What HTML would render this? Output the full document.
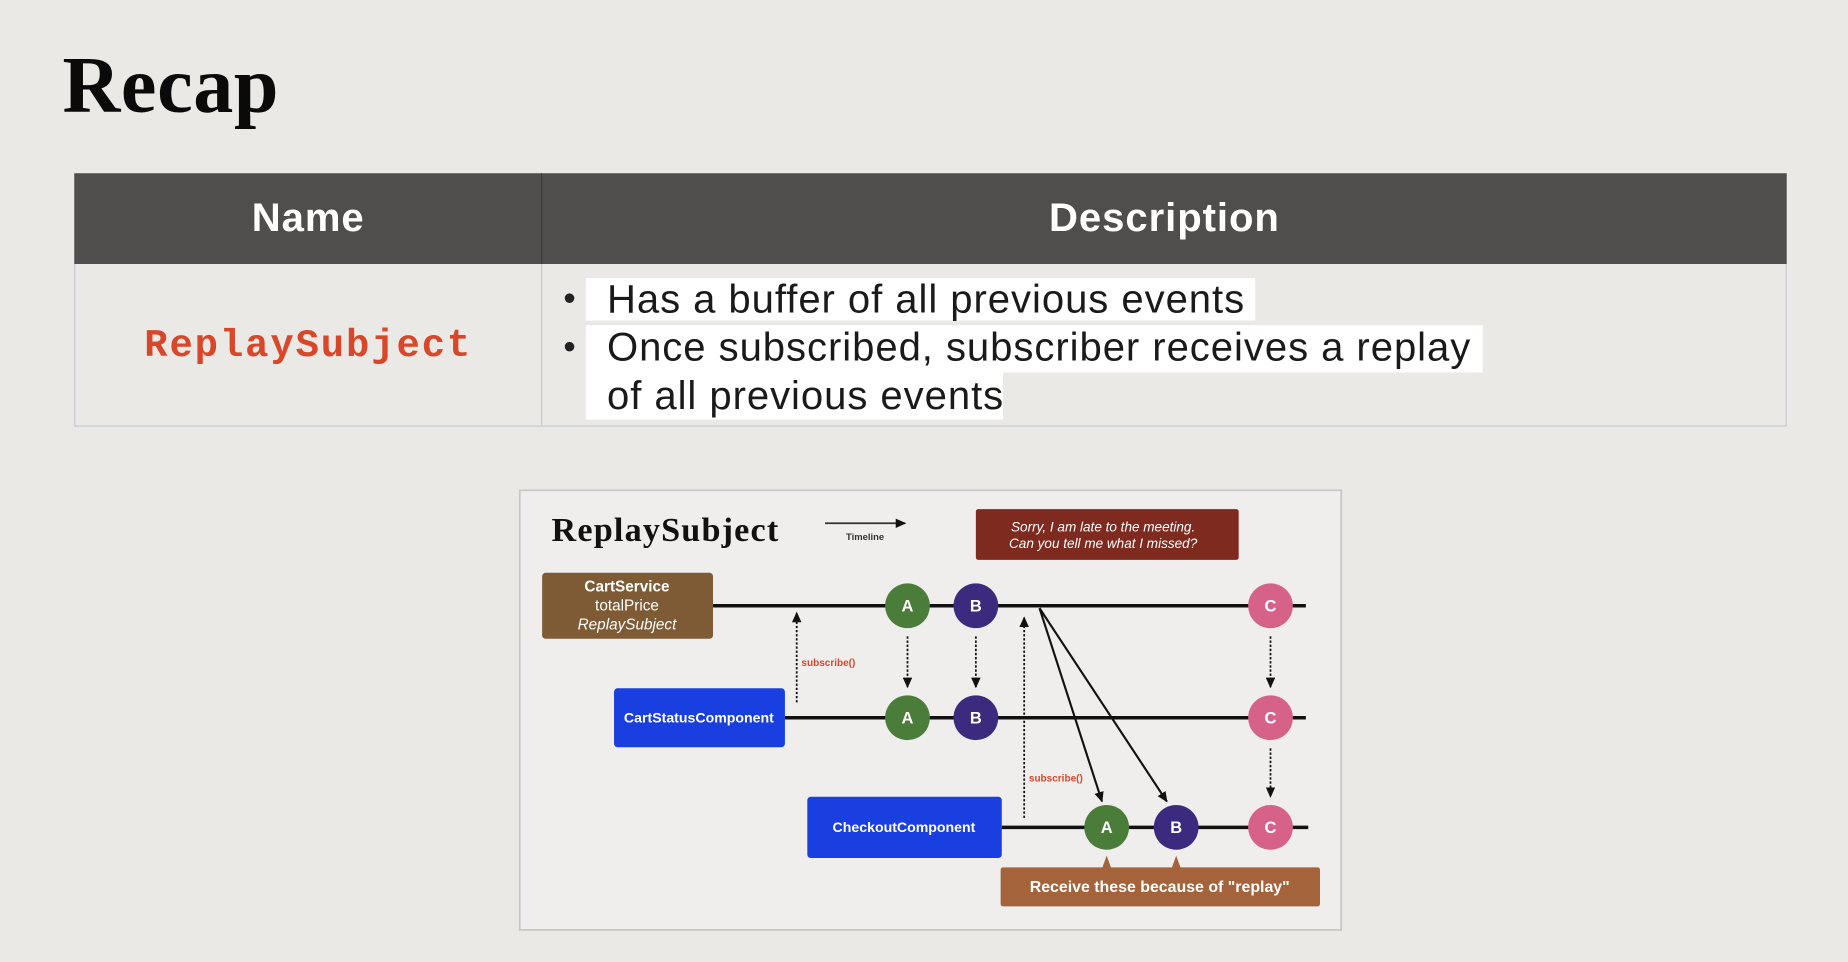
<!DOCTYPE html>
<html><head><meta charset="utf-8"><style>
html,body{margin:0;padding:0;width:1848px;height:962px;overflow:hidden;background:#ebe9e5;}
#s{position:absolute;left:0;top:0;width:1568px;height:816px;transform:scale(1.17857);transform-origin:0 0;background:#ebe9e5;font-family:"Liberation Sans",sans-serif;}
.t{position:absolute;}
.b{font-size:34px;line-height:40px;color:#1a1a1a;letter-spacing:0.8px}
</style></head><body><div id="s">
<div class="t" style="left:53px;top:32px;font-family:'Liberation Serif',serif;font-weight:bold;font-size:68px;line-height:80px;color:#0a0a0a;letter-spacing:0.5px">Recap</div>
<div class="t" style="left:63px;top:147px;width:1453px;height:77px;background:#4f4e4d"></div>
<div class="t" style="left:459px;top:147px;width:1px;height:77px;background:#3a3a3a"></div>
<div class="t" style="left:63px;top:224px;width:1451px;height:137px;border:1px solid #c3cbd2;border-top:none"></div>
<div class="t" style="left:459px;top:224px;width:1px;height:138px;background:#c3cbd2"></div>
<div class="t" style="left:63px;top:165px;width:397px;text-align:center;color:#fff;font-weight:bold;font-size:34px;line-height:40px;letter-spacing:0.8px">Name</div>
<div class="t" style="left:460px;top:165px;width:1056px;text-align:center;color:#fff;font-weight:bold;font-size:34px;line-height:40px;letter-spacing:0.8px">Description</div>
<div class="t" style="left:63px;top:274px;width:397px;text-align:center;color:#d9472b;font-weight:bold;font-family:'Liberation Mono',monospace;font-size:33px;line-height:40px;letter-spacing:1.6px">ReplaySubject</div>
<div class="t" style="left:497px;top:236px;width:568px;height:36px;background:#fff"></div>
<div class="t" style="left:497px;top:276px;width:761px;height:40px;background:#fff"></div>
<div class="t" style="left:497px;top:316px;width:354px;height:40px;background:#fff"></div>
<div class="t" style="left:478px;top:234px;font-size:30px;line-height:40px;color:#222">•</div>
<div class="t" style="left:478px;top:275px;font-size:30px;line-height:40px;color:#222">•</div>
<div class="t b" style="left:515px;top:234px">Has a buffer of all previous events</div>
<div class="t b" style="left:515px;top:275px">Once subscribed, subscriber receives a replay</div>
<div class="t b" style="left:515px;top:316px">of all previous events</div>
<svg class="t" style="left:0;top:0" width="1568" height="816" viewBox="0 0 1568 816" font-family="Liberation Sans, sans-serif">
<defs><marker id="ah" markerUnits="userSpaceOnUse" markerWidth="9" markerHeight="8" refX="8" refY="4" orient="auto"><path d="M0,0 L9,4 L0,8z" fill="#111"/></marker></defs>
<rect x="441" y="416" width="697" height="373" fill="#efeeec" stroke="#c8c8c8" stroke-width="1.5"/>
<text x="468" y="459" font-family="Liberation Serif, serif" font-weight="bold" font-size="29" fill="#111" letter-spacing="1">ReplaySubject</text>
<line x1="700" y1="444" x2="768" y2="444" stroke="#333" stroke-width="1.5" marker-end="url(#ah)"/>
<text x="734" y="458" font-size="8" text-anchor="middle" fill="#333" font-weight="bold">Timeline</text>
<rect x="828" y="432" width="223" height="43" fill="#7f2a1f" rx="2"/>
<text x="936" y="451" font-size="11.5" font-style="italic" fill="#fff" text-anchor="middle">Sorry, I am late to the meeting.</text>
<text x="936" y="465" font-size="11.5" font-style="italic" fill="#fff" text-anchor="middle">Can you tell me what I missed?</text>
<g stroke="#111" stroke-width="3"><line x1="605" y1="514" x2="1108" y2="514"/><line x1="666" y1="609" x2="1108" y2="609"/><line x1="850" y1="702" x2="1110" y2="702"/></g>
<rect x="460" y="486" width="145" height="56" rx="3" fill="#7e5a35"/>
<text x="532" y="502" font-size="13" font-weight="bold" fill="#fff" text-anchor="middle">CartService</text>
<text x="532" y="518" font-size="13" fill="#fff" text-anchor="middle">totalPrice</text>
<text x="532" y="534" font-size="13" font-style="italic" fill="#fff" text-anchor="middle">ReplaySubject</text>
<rect x="521" y="584" width="145" height="50" rx="3" fill="#1a3fe0"/>
<text x="593" y="613" font-size="12" font-weight="bold" fill="#fff" text-anchor="middle">CartStatusComponent</text>
<rect x="685" y="676" width="165" height="52" rx="3" fill="#1a3fe0"/>
<text x="767" y="706" font-size="12" font-weight="bold" fill="#fff" text-anchor="middle">CheckoutComponent</text>
<g stroke="#111" stroke-width="1.5" stroke-dasharray="2,1.5">
<line x1="676" y1="596" x2="676" y2="520" marker-end="url(#ah)"/>
<line x1="869" y1="694" x2="869" y2="524" marker-end="url(#ah)"/>
<line x1="770" y1="540" x2="770" y2="583" marker-end="url(#ah)"/>
<line x1="828" y1="540" x2="828" y2="583" marker-end="url(#ah)"/>
<line x1="1078" y1="540" x2="1078" y2="583" marker-end="url(#ah)"/>
<line x1="1078" y1="635" x2="1078" y2="676" marker-end="url(#ah)"/>
</g>
<g stroke="#111" stroke-width="1.8"><line x1="882" y1="516" x2="935" y2="680" marker-end="url(#ah)"/><line x1="882" y1="516" x2="990" y2="680" marker-end="url(#ah)"/></g>
<text x="680" y="565" font-size="8.5" fill="#d9472b" font-weight="bold">subscribe()</text>
<text x="873" y="663" font-size="8.5" fill="#d9472b" font-weight="bold">subscribe()</text>
<g font-size="14" font-weight="bold" fill="#fff" text-anchor="middle">
<circle cx="770" cy="514" r="19" fill="#4a7d3a"/><text x="770" y="519">A</text>
<circle cx="828" cy="514" r="19" fill="#3b2a7e"/><text x="828" y="519">B</text>
<circle cx="1078" cy="514" r="19" fill="#d6628a"/><text x="1078" y="519">C</text>
<circle cx="770" cy="609" r="19" fill="#4a7d3a"/><text x="770" y="614">A</text>
<circle cx="828" cy="609" r="19" fill="#3b2a7e"/><text x="828" y="614">B</text>
<circle cx="1078" cy="609" r="19" fill="#d6628a"/><text x="1078" y="614">C</text>
<circle cx="939" cy="702" r="19" fill="#4a7d3a"/><text x="939" y="707">A</text>
<circle cx="998" cy="702" r="19" fill="#3b2a7e"/><text x="998" y="707">B</text>
<circle cx="1078" cy="702" r="19" fill="#d6628a"/><text x="1078" y="707">C</text>
</g>
<path d="M935,737 L939,726 L943,737z M994,737 L998,726 L1002,737z" fill="#a4633a"/>
<rect x="849" y="736" width="271" height="33" rx="2" fill="#a4633a"/>
<text x="984" y="757" font-size="13.5" font-weight="bold" fill="#fff" text-anchor="middle">Receive these because of "replay"</text>
</svg>
</div></body></html>
